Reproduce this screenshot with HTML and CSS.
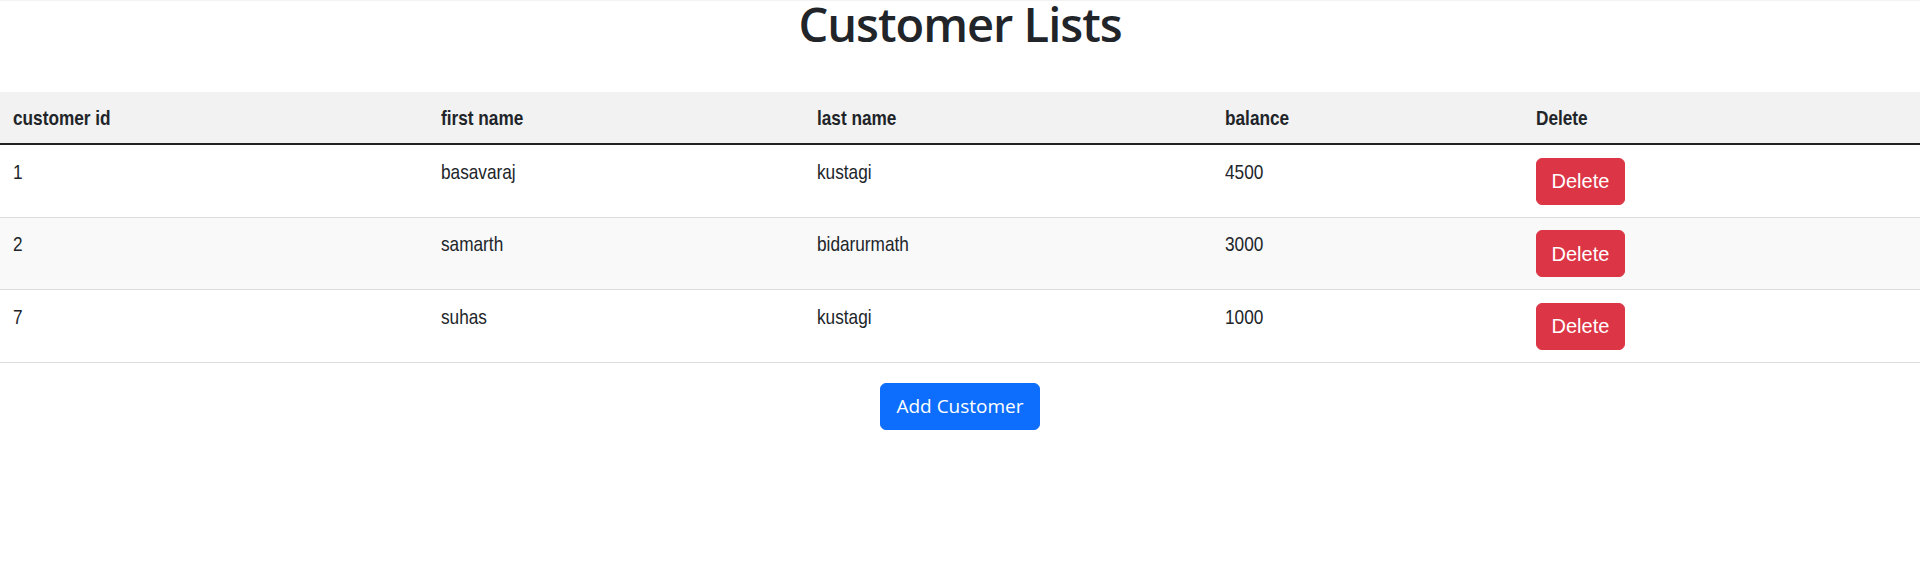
FILE: index.html
```html
<!DOCTYPE html>
<html lang="en">
<head>
<meta charset="utf-8">
<title>Customer Lists</title>
<link rel="stylesheet" href="styles.css">
</head>
<body>
<div class="page">
  <h1 class="title">Customer Lists</h1>
  <table class="customers">
    <colgroup>
      <col class="c1"><col class="c2"><col class="c3"><col class="c4"><col class="c5">
    </colgroup>
    <thead>
      <tr>
        <th><span class="nar">customer id</span></th>
        <th><span class="nar">first name</span></th>
        <th><span class="nar">last name</span></th>
        <th><span class="nar">balance</span></th>
        <th><span class="nar">Delete</span></th>
      </tr>
    </thead>
    <tbody>
      <tr>
        <td><span class="nar">1</span></td>
        <td><span class="nar">basavaraj</span></td>
        <td><span class="nar">kustagi</span></td>
        <td><span class="nar">4500</span></td>
        <td><button class="btn btn-danger">Delete</button></td>
      </tr>
      <tr class="striped">
        <td><span class="nar">2</span></td>
        <td><span class="nar">samarth</span></td>
        <td><span class="nar">bidarurmath</span></td>
        <td><span class="nar">3000</span></td>
        <td><button class="btn btn-danger">Delete</button></td>
      </tr>
      <tr>
        <td><span class="nar">7</span></td>
        <td><span class="nar">suhas</span></td>
        <td><span class="nar">kustagi</span></td>
        <td><span class="nar">1000</span></td>
        <td><button class="btn btn-danger">Delete</button></td>
      </tr>
    </tbody>
  </table>
  <div class="actions">
    <button class="btn-primary">Add Customer</button>
  </div>
</div>
</body>
</html>
```
FILE: styles.css
```css
html, body {
  margin: 0;
  padding: 0;
  background: #ffffff;
}
body {
  color: #212529;
  font-family: "Open Sans", "Noto Sans", sans-serif;
}
.page {
  border-top: 1px solid #f3f3f3;
}
.title {
  margin: -1px 0 44px;
  font-family: "Open Sans", "Noto Sans", sans-serif;
  font-weight: 600;
  font-size: 47px;
  line-height: 48px;
  letter-spacing: -1px;
  text-align: center;
  color: #212529;
}
.customers {
  width: 100%;
  border-collapse: collapse;
  font-family: "Liberation Sans", Arial, sans-serif;
  font-size: 21px;
  color: #212529;
}
.nar {
  display: inline-block;
  transform: scaleX(0.82);
  transform-origin: 0 0;
}
.c1 { width: 428px; }
.c2 { width: 376px; }
.c3 { width: 408px; }
.c4 { width: 311px; }
.c5 { width: auto; }
.customers th {
  text-align: left;
  font-weight: bold;
  background: #f2f2f2;
  padding: 12.5px 12.5px;
  line-height: 26px;
  border-bottom: 2px solid #222222;
}
.customers td {
  padding: 12.5px 12.5px 12px;
  line-height: 28px;
  vertical-align: top;
  border-bottom: 1px solid #dcdcdc;
}
.customers tr.striped td {
  background: #f9f9f9;
}
.btn {
  font-family: "Liberation Sans", Arial, sans-serif;
  font-size: 20px;
  line-height: 30px;
  padding: 7.5px 15px;
  border: 1.25px solid #dc3545;
  border-radius: 6px;
  background: #dc3545;
  color: #ffffff;
  display: block;
}
.actions {
  display: flex;
  justify-content: center;
  padding-top: 20px;
}
.btn-primary {
  font-family: "Open Sans", "Noto Sans", sans-serif;
  font-size: 19px;
  line-height: 30px;
  padding: 7.5px 15px;
  border: 1.25px solid #0d6efd;
  border-radius: 6px;
  background: #0d6efd;
  color: #ffffff;
  width: 160px;
  text-align: center;
}
```
